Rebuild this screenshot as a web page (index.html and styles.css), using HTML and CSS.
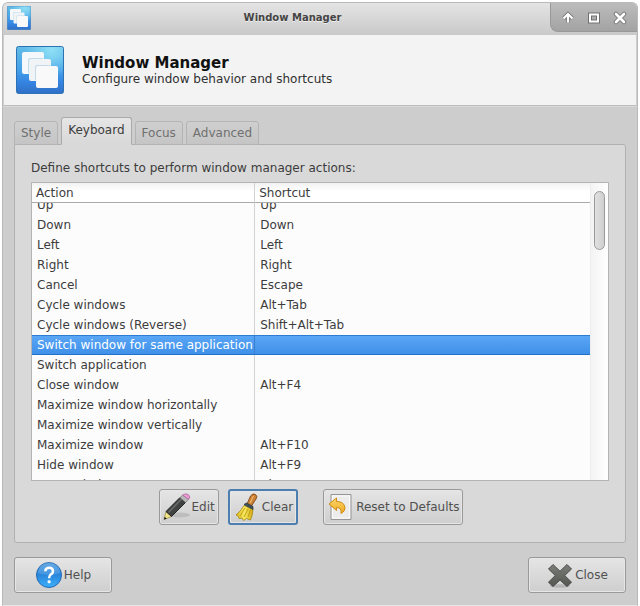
FILE: index.html
```html
<!DOCTYPE html>
<html lang="en">
<head>
<meta charset="utf-8">
<title>Window Manager</title>
<link rel="stylesheet" href="styles.css">
</head>
<body>
<svg width="0" height="0" class="defs" aria-hidden="true">
  <defs>
    <linearGradient id="blue" x1="0" y1="0" x2="0" y2="1"><stop offset="0" stop-color="#62bce6"/><stop offset=".5" stop-color="#45a0e8"/><stop offset=".75" stop-color="#3585e2"/><stop offset="1" stop-color="#2f6fc6"/></linearGradient>
    <radialGradient id="shine" cx=".75" cy=".05" r=".6"><stop offset="0" stop-color="#8fe0f6"/><stop offset="1" stop-color="#8fe0f6" stop-opacity="0"/></radialGradient>
    <linearGradient id="bristle" x1="0" y1="0" x2="1" y2="0"><stop offset="0" stop-color="#d8b818"/><stop offset=".5" stop-color="#f8e860"/><stop offset="1" stop-color="#d0aa10"/></linearGradient>
    <linearGradient id="gold" x1="0" y1="0" x2="0" y2="1"><stop offset="0" stop-color="#fbd86c"/><stop offset="1" stop-color="#f0a820"/></linearGradient>
    <linearGradient id="ball" x1="0" y1="0" x2="0" y2="1"><stop offset="0" stop-color="#4f9fe0"/><stop offset=".5" stop-color="#2a86dc"/><stop offset="1" stop-color="#3cb0fa"/></linearGradient>
    <linearGradient id="cross" x1="0" y1="0" x2="0" y2="1"><stop offset="0" stop-color="#7c7e7a"/><stop offset="1" stop-color="#535551"/></linearGradient>
    <symbol id="windows" viewBox="0 0 48 48">
      <rect x=".5" y=".5" width="47" height="47" rx="2" fill="url(#blue)" stroke="#2d72b4"/>
      <rect x="1" y="1" width="46" height="46" rx="2" fill="url(#shine)"/>
      <rect x="6" y="6" width="22" height="22" rx="2" fill="#f4f8fb"/>
      <rect x="12" y="12" width="16" height="16" rx="2" fill="#c3dcec"/>
      <rect x="13" y="13" width="22" height="22" rx="2" fill="#f0f4f7"/>
      <rect x="19" y="19" width="16" height="16" rx="2" fill="#c5dae8"/>
      <rect x="20" y="20" width="22" height="22" rx="2" fill="#f9f9fa"/>
    </symbol>
  </defs>
</svg>
<div class="window">
  <header class="titlebar">
    <svg class="app-icon"><use href="#windows"/></svg>
    <span class="title">Window Manager</span>
    <div class="controls">
      <button type="button" aria-label="Shade"><svg viewBox="0 0 14 14"><path d="M2.500 7.500 7 3l4.500 4.500M7 4v7.500" fill="none" stroke="#777" stroke-width="4"/><path d="M2.500 7.500 7 3l4.500 4.500M7 4v7.500" fill="none" stroke="#fff" stroke-width="2.200"/></svg></button>
      <button type="button" aria-label="Maximize"><svg viewBox="0 0 14 14"><path d="M3 3.500h8v7H3z" fill="none" stroke="#707070" stroke-width="4"/><path d="M3 3.500h8v7H3z" fill="none" stroke="#fff" stroke-width="2"/></svg></button>
      <button type="button" aria-label="Close window"><svg viewBox="0 0 14 14"><path d="M3 3l8 8M11 3l-8 8" stroke="#777" stroke-width="4.500" stroke-linecap="round"/><path d="M3 3l8 8M11 3l-8 8" stroke="#fff" stroke-width="2.600" stroke-linecap="round"/></svg></button>
    </div>
  </header>
  <section class="banner">
    <svg class="banner-icon"><use href="#windows"/></svg>
    <div>
      <h1>Window Manager</h1>
      <p>Configure window behavior and shortcuts</p>
    </div>
  </section>
  <main class="content">
    <div class="tabs" role="tablist">
      <button type="button" class="tab" role="tab">Style</button>
      <button type="button" class="tab active" role="tab" aria-selected="true">Keyboard</button>
      <button type="button" class="tab" role="tab">Focus</button>
      <button type="button" class="tab" role="tab">Advanced</button>
    </div>
    <section class="panel">
      <p class="caption" id="caption">Define shortcuts to perform window manager actions:</p>
      <div class="list">
        <div class="viewport" id="viewport">
          <table aria-labelledby="caption">
            <thead><tr><th class="action">Action</th><th>Shortcut</th></tr></thead>
            <tbody>
              <tr><td>Up</td><td>Up</td></tr>
              <tr><td>Down</td><td>Down</td></tr>
              <tr><td>Left</td><td>Left</td></tr>
              <tr><td>Right</td><td>Right</td></tr>
              <tr><td>Cancel</td><td>Escape</td></tr>
              <tr><td>Cycle windows</td><td>Alt+Tab</td></tr>
              <tr><td>Cycle windows (Reverse)</td><td>Shift+Alt+Tab</td></tr>
              <tr class="selected"><td>Switch window for same application</td><td></td></tr>
              <tr><td>Switch application</td><td></td></tr>
              <tr><td>Close window</td><td>Alt+F4</td></tr>
              <tr><td>Maximize window horizontally</td><td></td></tr>
              <tr><td>Maximize window vertically</td><td></td></tr>
              <tr><td>Maximize window</td><td>Alt+F10</td></tr>
              <tr><td>Hide window</td><td>Alt+F9</td></tr>
              <tr><td>Move window</td><td>Alt+F7</td></tr>
            </tbody>
          </table>
        </div>
        <div class="track"><div class="thumb"></div></div>
      </div>
      <div class="actions">
        <button type="button" class="btn">
          <svg class="icon" viewBox="0 0 28 28"><ellipse cx="16" cy="22" rx="11" ry="2.500" fill="#b4b4b4" opacity=".7"/><path d="M1 26.500 3 18.500 8.500 23.500z" fill="#f2e58a" stroke="#8a7a30" stroke-width=".6"/><path d="M1 26.500l.7-2.700 2 1.900z" fill="#111"/><path d="M3 18.500 17 4.500 22.500 9.500 8.500 23.500z" fill="#414343" stroke="#262626"/><path d="M5.500 19.500 18.500 6" stroke="#6b6d6d" stroke-width="1.500"/><path d="M17 4.500 20 2 25.500 6.500 22.500 9.500z" fill="#b7b9bb" stroke="#777" stroke-width=".7"/><path d="M19.500 2.200Q23-.5 25.500 1.800T25.700 6.300z" fill="#eb9cd4" stroke="#a96b98" stroke-width=".8"/></svg>
          <span>Edit</span>
        </button>
        <button type="button" class="btn focused">
          <svg class="icon" viewBox="0 0 28 28"><path d="M14 11 17.500 3Q20-.3 22.500 1.500T23 6L18.500 13z" fill="#cb8135" stroke="#7f4a18" stroke-width=".9"/><path d="M17 10l3.500-7" stroke="#edb36c" stroke-width="1.200"/><path d="M11 12.500Q8 18 3 22l2.500 1.500.5 2 3-.5 1.500 2.500 3-2 4 1.500Q20 21 20 16z" fill="url(#bristle)" stroke="#a58412" stroke-width=".8"/><path d="M12 15l-5 8M15 16l-4 8M17.500 17l-2.500 7" stroke="#bc9912" stroke-width=".9"/><path d="M11 11.500 13.500 10 20 13.500 20 16.500z" fill="#3e5260" stroke="#26343d" stroke-width=".7"/></svg>
          <span>Clear</span>
        </button>
        <button type="button" class="btn reset">
          <svg class="icon" viewBox="0 0 28 28"><path d="M4 1.500h20v25H4z" fill="#ececec" stroke="#969696"/><path d="M5.500 3h17v22h-17z" fill="none" stroke="#fafafa"/><path d="M2 11 9.500 5v3.500Q17.500 8.500 18 15 18 18.500 14 20.500 15 14.500 9.500 14.500V17.500z" fill="url(#gold)" stroke="#cf8c13" stroke-linejoin="round"/></svg>
          <span>Reset to Defaults</span>
        </button>
      </div>
    </section>
    <footer class="footer">
      <button type="button" class="btn wide">
        <svg class="icon" viewBox="0 0 28 28"><circle cx="14" cy="14" r="12.500" fill="url(#ball)" stroke="#2169b4"/><path d="M3 12A11 11 0 0 1 25 12Q14 16 3 12z" fill="#fff" opacity=".12"/><path d="M10.300 10.200Q10.500 6.800 14.200 6.800T18 10.200Q18 12 16 13.300T14.100 17.300" fill="none" stroke="#fff" stroke-width="2.500"/><rect x="12.600" y="19.300" width="3" height="3" rx="1" fill="#fff"/></svg>
        <span>Help</span>
      </button>
      <button type="button" class="btn wide">
        <svg class="icon" viewBox="0 0 28 28"><ellipse cx="14" cy="25" rx="10" ry="1.800" fill="#b5b5b5"/><path d="M7 3.500 14 10.300 21 3.500 25.500 8 18.700 14.500 25.500 21.200 21 25.500 14 19 7 25.500 2.500 21.200 9.300 14.500 2.500 8z" fill="url(#cross)" stroke="#474945" stroke-linejoin="round"/></svg>
        <span>Close</span>
      </button>
    </footer>
  </main>
</div>
<script src="list.js"></script>
</body>
</html>
```
FILE: styles.css
```css
* {
  box-sizing: border-box;
}

body {
  margin: 0;
  padding: 2px 2px 0;
  background: #fff;
  color: #3c3c3c;
  font: 12px/20px "DejaVu Sans", sans-serif;
}

button {
  margin: 0;
  color: inherit;
  font: inherit;
}

h1,
p {
  margin: 0;
}

.defs {
  position: absolute;
}

.window {
  border: 1px solid #b9b9b9;
  border-bottom-color: #e6e6e6;
  border-radius: 6px 6px 0 0;
  background: #cdcdcd;
  overflow: hidden;
}

.titlebar {
  display: flex;
  align-items: flex-start;
  justify-content: space-between;
  height: 32px;
  background: linear-gradient(#e4e4e4, #c9c9c9);
}

.app-icon {
  width: 24px;
  height: 24px;
  margin: 3px 4px;
}

.title {
  color: #444;
  font-size: 10px;
  font-weight: bold;
  line-height: 30px;
  text-shadow: 0 1px #eee;
}

.controls {
  display: flex;
  gap: 12px;
  height: 29px;
  padding: 8px 10px 0;
  border: 1px solid #999;
  border-width: 0 0 1px 1px;
  border-bottom-left-radius: 8px;
  background: linear-gradient(#bcbcbc, #a3a3a3);
}

.controls button {
  width: 14px;
  height: 14px;
  padding: 0;
  border: 0;
  background: none;
}

.controls svg {
  display: block;
}

.banner {
  display: flex;
  align-items: center;
  gap: 18px;
  height: 71px;
  margin: 0 1px;
  padding: 0 12px;
  border-bottom: 1px solid #bdbdbd;
  background: #f3f3f3;
  color: #303030;
}

.banner-icon {
  width: 48px;
  height: 48px;
}

.banner h1 {
  padding-top: 2px;
  color: #111;
  font-size: 15px;
  line-height: 16px;
}

.banner p {
  line-height: 16px;
}

.content {
  padding: 10px 11px 12px;
  border-top: 1px solid #dadada;
}

.tabs {
  display: flex;
  align-items: flex-end;
  gap: 3px;
  margin-bottom: -1px;
}

.tab {
  height: 24px;
  padding: 0 6px;
  border: 1px solid #b4b4b4;
  border-radius: 3px 3px 0 0;
  background: linear-gradient(#cfcfcf, #c5c5c5);
  color: #707070;
}

.tab.active {
  height: 28px;
  padding-bottom: 2px;
  border-color: #aaa;
  border-bottom-color: #d9d9d9;
  background: linear-gradient(#e6e6e6, #d9d9d9);
  color: #3c3c3c;
}

.panel {
  padding: 13px 16px 17px;
  border: 1px solid #b0b0b0;
  border-radius: 0 3px 3px 3px;
  background: #d9d9d9;
}

.caption {
  margin-bottom: 4px;
}

.list {
  display: grid;
  grid-template-columns: 1fr 18px;
  height: 299px;
  border: 1px solid #b4b4b4;
  background: #fcfcfc;
}

.viewport {
  overflow: hidden;
}

table {
  width: 100%;
  border-collapse: separate;
  border-spacing: 0;
  table-layout: fixed;
}

th,
td {
  height: 20px;
  padding: 0 5px;
  font-weight: normal;
  line-height: 18px;
  text-align: left;
  white-space: nowrap;
}

th {
  position: sticky;
  top: 0;
  padding-left: 4px;
  border-bottom: 1px solid #aaa;
  background: linear-gradient(#f2f2f2, #fff 8px);
}

.action {
  width: 40%;
}

th:first-child,
td:first-child {
  border-right: 1px solid #d2d2d2;
}

.selected td {
  border-top: 1px solid #2b7cd2;
  border-bottom: 1px solid #2171c8;
  background: linear-gradient(#5aa6f6, #3f90e9);
  color: #fff;
}

.selected td:first-child {
  border-right-color: #3680cf;
}

.track {
  padding: 8px 3px;
  border-left: 1px solid #ededed;
  background: linear-gradient(90deg, #f3f3f3, #fff);
}

.thumb {
  height: 59px;
  border: 1px solid #999;
  border-radius: 6px;
  background: linear-gradient(90deg, #e0e0e0, #d0d0d0);
}

.actions {
  display: flex;
  justify-content: center;
  gap: 9px;
  margin: 8px 18px 0 0;
}

.btn {
  display: flex;
  align-items: center;
  justify-content: center;
  height: 36px;
  padding: 0 3px;
  gap: 1px;
  border: 1px solid #999;
  border-radius: 3px;
  background: linear-gradient(#e5e5e5, #cecece);
  box-shadow: inset 0 0 0 1px #e6e6e6;
  color: #505050;
}

.icon {
  flex: none;
  width: 28px;
  height: 28px;
}

.focused {
  border: 2px solid #4c7eb0;
}

.reset {
  margin-left: 16px;
}

.footer {
  display: flex;
  justify-content: space-between;
  margin-top: 14px;
}

.wide {
  width: 98px;
}
```
FILE: list.js
```js
document.getElementById("viewport").scrollTop = 8;
```
